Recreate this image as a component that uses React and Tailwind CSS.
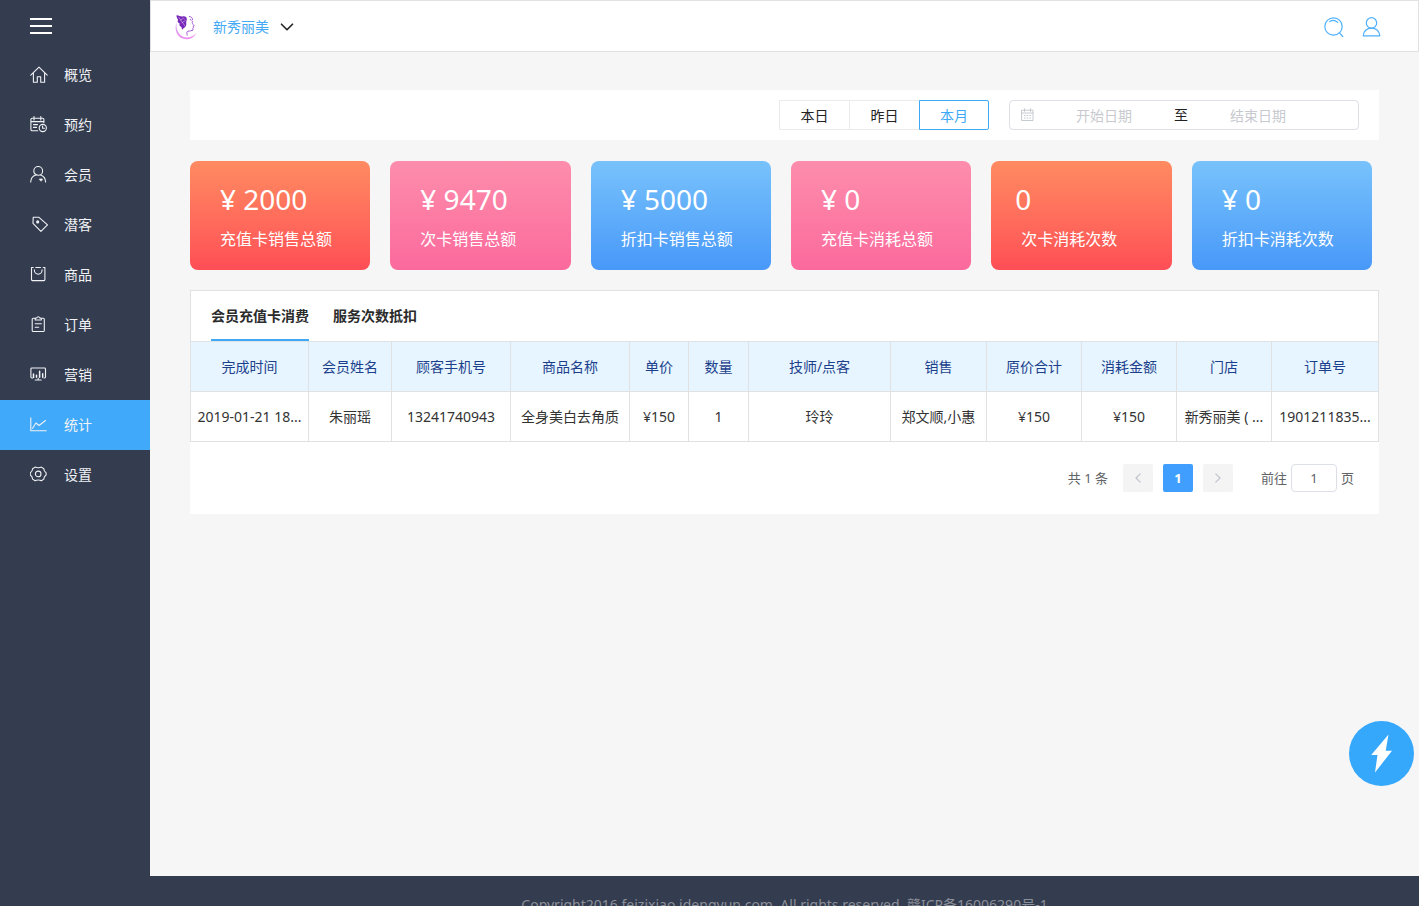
import React from "react";

const stroke = {
  fill: "none",
  stroke: "currentColor",
  strokeLinecap: "round",
  strokeLinejoin: "round",
};

function Icon({ children }) {
  return (
    <svg className="size-[18px] shrink-0" viewBox="0 0 18 18" strokeWidth="1.1" aria-hidden="true" {...stroke}>
      {children}
    </svg>
  );
}

const menu = [
  {
    label: "概览",
    icon: (
      <Icon>
        <path d="M.8 9.2 9 1.2l8.2 8M3.4 7.4v8.800h3.900v-5.500h3.400v5.500h3.900V7.4" />
      </Icon>
    ),
  },
  {
    label: "预约",
    icon: (
      <Icon>
        <path d="M7.8 14.700H2.2C1.4 14.700.9 14.200.9 13.400V3.600c0-.8.5-1.300 1.300-1.300h10.400c.8 0 1.300.5 1.300 1.300v3M.9 5.600h13M4 .6v3.400M10.800.6v3.400M3.500 8.600h4M3.500 11.400h3" />
        <circle cx="12.800" cy="12" r="3.600" />
        <path d="M12.600 10v2.200h1.800" />
      </Icon>
    ),
  },
  {
    label: "会员",
    icon: (
      <Icon>
        <circle cx="8.2" cy="4.900" r="4.400" />
        <path d="M.7 16c.2-3.600 2.300-6 5-6.900M10.700 9.100c2.800 1 4.800 3.300 4.900 6.900" />
        <path d="M10.900 15.200 9.300 13.600c-.3-.8.900-1.200 1.600-.5.8-.7 2-.3 1.700.5z" fill="currentColor" strokeWidth=".4" />
      </Icon>
    ),
  },
  {
    label: "潜客",
    icon: (
      <Icon>
        <path d="M3.200 1.200h5.500l8.800 7.600-6.600 6.600-7.900-8z" />
        <circle cx="7.700" cy="5.900" r="1" fill="currentColor" />
      </Icon>
    ),
  },
  {
    label: "商品",
    icon: (
      <Icon>
        <path d="M3.200 1.500H1.500v12.100c0 .6.400 1 1 1h11.400c.6 0 1-.4 1-1V1.500h-1.700M5.800 1.500h4.700M4.300 3.800c0 2.500 1.700 4.400 3.900 4.400s3.900-1.900 3.900-4.400" />
      </Icon>
    ),
  },
  {
    label: "订单",
    icon: (
      <Icon>
        <path d="M5.200 2.200H3.300c-.6 0-1.100.5-1.100 1.100v11.100c0 .6.500 1.100 1.100 1.100h9.900c.6 0 1.100-.5 1.100-1.100V3.300c0-.6-.5-1.100-1.100-1.100h-1.900M5.200 4V2.200L6.800 1.900c.5-1.500 2.400-1.500 2.900 0l1.600.3V4zM5.200 7.700h6.200M5.200 11.200h3.500" />
      </Icon>
    ),
  },
  {
    label: "营销",
    icon: (
      <Icon>
        <path d="M2.500 12H1.800c-.5 0-.9-.4-.9-.9V2.900c0-.5.400-.9.900-.9h12.800c.5 0 .9.400.9.900v8.200c0 .5-.4.900-.9.900h-.6M5.200 14h6M8.200 12.200V14" />
        <path d="M3.500 8v3.400M6.500 9.300v2M9.600 5.300v6M12.700 7.700v3.600" strokeWidth="1.500" />
      </Icon>
    ),
  },
  {
    label: "统计",
    active: true,
    icon: (
      <Icon>
        <path d="M.8 1.800v13h15.400M2.600 12.300 5.900 7l3.200 2.500 6.400-5" />
      </Icon>
    ),
  },
  {
    label: "设置",
    icon: (
      <Icon>
        <path d="M5.100 1.100c1 .5 1.700.6 3.100.6s2.200-.1 3.200-.6l2.400 1.600c.1 2 .5 2.900 2.300 4v2.300c-1.700 1.200-2.200 2.100-2.300 4.100l-2.400 1.600c-1-.6-1.800-.7-3.200-.7s-2.100.1-3.100.7l-2.500-1.600C2.500 11.100 2 10.200.300 9V6.700c1.800-1.100 2.200-2 2.300-4z" />
        <circle cx="8.200" cy="7.900" r="2.800" />
      </Icon>
    ),
  },
];

const cards = [
  { value: "¥ 2000", label: "充值卡销售总额", tone: "from-[#ff8a61] to-[#fe4d56]", pad: "pl-[30px]" },
  { value: "¥ 9470", label: "次卡销售总额", tone: "from-[#fd8dac] to-[#fb699c]", pad: "pl-[30px]" },
  { value: "¥ 5000", label: "折扣卡销售总额", tone: "from-[#78c2fb] to-[#4898f9]", pad: "pl-[30px]" },
  { value: "¥ 0", label: "充值卡消耗总额", tone: "from-[#fd8dac] to-[#fb699c]", pad: "pl-[30px]" },
  { value: "0", label: "次卡消耗次数", tone: "from-[#ff8a61] to-[#fe4d56]", pad: "pl-6" },
  { value: "¥ 0", label: "折扣卡消耗次数", tone: "from-[#78c2fb] to-[#4898f9]", pad: "pl-[30px]" },
];

const columns = [
  { title: "完成时间", width: "w-[118px]", cell: "2019-01-21 18..." },
  { title: "会员姓名", width: "w-[83px]", cell: "朱丽瑶" },
  { title: "顾客手机号", width: "w-[119px]", cell: "13241740943" },
  { title: "商品名称", width: "w-[119px]", cell: "全身美白去角质" },
  { title: "单价", width: "w-[59px]", cell: "¥150" },
  { title: "数量", width: "w-[60px]", cell: "1" },
  { title: "技师/点客", width: "w-[142px]", cell: "玲玲" },
  { title: "销售", width: "w-[96px]", cell: "郑文顺,小惠" },
  { title: "原价合计", width: "w-[95px]", cell: "¥150" },
  { title: "消耗金额", width: "w-[95px]", cell: "¥150" },
  { title: "门店", width: "w-[95px]", cell: "新秀丽美 ( ..." },
  { title: "订单号", width: "w-[107px]", cell: "1901211835..." },
];

function Sidebar() {
  return (
    <aside className="w-[150px] shrink-0 bg-[#343c4f] text-[#f0f2f5]">
      <button type="button" aria-label="菜单" className="flex h-[50px] w-full flex-col gap-[5px] pt-[18px] pl-[30px]">
        <span className="h-[2px] w-[22px] bg-white" />
        <span className="h-[2px] w-[22px] bg-white" />
        <span className="h-[2px] w-[22px] bg-white" />
      </button>
      <nav>
        {menu.map((m) => (
          <a
            key={m.label}
            href="#"
            className={
              m.active
                ? "flex h-[50px] items-center gap-4 bg-[#40a9fa] pl-[30px]"
                : "flex h-[50px] items-center gap-4 pl-[30px]"
            }
          >
            {m.icon}
            <span>{m.label}</span>
          </a>
        ))}
      </nav>
    </aside>
  );
}

function Logo() {
  return (
    <svg className="h-[26px] w-6" viewBox="0 0 24 26" fill="none" aria-hidden="true">
      <defs>
        <linearGradient id="ring" x1="0" y1="0" x2="1" y2="1">
          <stop offset="0" stopColor="#d9a0ee" />
          <stop offset="1" stopColor="#f47ff0" />
        </linearGradient>
      </defs>
      <path d="M1.600 8C-1.500 17 3 25.500 12 25.200c4.500-.2 7.600-2.700 9.400-6.200-2.700 3-5.700 4.700-9.600 4.500C4.500 23.200.5 16.500 1.600 8z" fill="url(#ring)" />
      <path d="M1.500 1.200c3 .1 4.200 1.700 6 1.200 2.600-.5 4.400.600 4.300 2.900 0 1.500-.9 2.300-.6 3.700.4 1.900-.1 3.500-1.600 4.400-1 .6-1.700 1.300-2.300 2.400-.8-1-.4-2-.9-2.800-1.800-.6-2.400-2-1.700-3.400C2.500 8.500 2.100 7 3.200 5.700 2 4.500 1.500 3 1.500 1.200z" fill="#7627b8" />
      <path d="m3.500 3 6.500 9M5 6.500l3-2M6.500 9l4-2.500M8 3.500l1.700 2" stroke="#d9b8ee" strokeWidth=".6" />
      <path d="M14 2.500c2.500.1 3.600 1.500 3.500 3.600M15.300 5l1 1.600M17.500 7.200c-.6 1.700 0 2.500 1.700 4.500l-1.200.9.500 1.200-.7.800.2 1.600c-1.800.9-3.300.4-5.600 1.200-.9.500-.4 2.200-.2 4.200" stroke="#a75bd8" strokeWidth="1" />
    </svg>
  );
}

function Header() {
  return (
    <header className="flex h-[52px] shrink-0 items-center border border-[#e0e1e3] bg-white pt-[2px] pr-9 pl-6">
      <Logo />
      <button type="button" className="ml-3.5 flex items-center gap-[11px] text-[#44a9f5]">
        <span>新秀丽美</span>
        <svg className="h-2 w-[14px] text-[#222]" viewBox="0 0 14 8" strokeWidth="1.6" {...stroke}>
          <path d="m1.500 1.200 5.500 5.500 5.500-5.500" />
        </svg>
      </button>
      <div className="ml-auto flex gap-[18px] text-[#4fb0fb]">
        <button type="button" aria-label="搜索">
          <svg className="size-5" viewBox="0 0 20 20" strokeWidth="1.200" {...stroke}>
            <circle cx="9.500" cy="9.500" r="8.700" />
            <path d="M5.800 4.600c2.500-1.700 5.600-1.500 7.800.7M15.300 15.700l3.500 3.800" />
          </svg>
        </button>
        <button type="button" aria-label="用户">
          <svg className="size-5" viewBox="0 0 20 20" strokeWidth="1.200" {...stroke}>
            <circle cx="9.500" cy="5.900" r="5.200" />
            <path d="M1.200 18.800c.200-4.400 3.500-7.700 8.300-7.700s8.100 3.300 8.300 7.700z" />
          </svg>
        </button>
      </div>
    </header>
  );
}

function Filters() {
  return (
    <section className="flex h-[50px] items-center justify-end gap-5 bg-white pr-5">
      <div className="flex h-[30px] text-[#222]">
        <button type="button" className="w-[70px] rounded-l-[2px] border border-r-0 border-[#ebebeb] pt-[2px]">本日</button>
        <button type="button" className="w-[70px] border border-r-0 border-[#ebebeb] pt-[2px]">昨日</button>
        <button type="button" className="w-[70px] rounded-r-[2px] border border-[#40a9f5] pt-[2px] text-[#40a9f5]">本月</button>
      </div>
      <div className="flex h-[30px] w-[350px] items-center rounded border border-[#dcdfe6] pl-[11px]">
        <svg className="size-[14px] shrink-0 text-[#c0c4cc]" viewBox="0 0 14 14" strokeWidth=".9" {...stroke}>
          <path d="M1 2.200h11v10.300H1zM1 5h11M3.500.8v2.500M9.500.8v2.500" />
          <path d="M3.400 7.500h.8M6.100 7.500h.8M8.800 7.500h.8M3.400 10h.8M6.100 10h.8M8.800 10h.8" />
        </svg>
        <input aria-label="开始日期" placeholder="开始日期" className="w-[138px] pt-[2px] text-center outline-none placeholder:text-[#c8cacf]" />
        <span className="w-4 text-center text-[#222]">至</span>
        <input aria-label="结束日期" placeholder="结束日期" className="w-[138px] pt-[2px] text-center outline-none placeholder:text-[#c8cacf]" />
      </div>
    </section>
  );
}

function Pagination() {
  return (
    <div className="flex h-[72px] items-center justify-end pr-[25px] text-[13px] text-[#606266]">
      <span className="mr-[15px]">共 1 条</span>
      <div className="flex gap-2.5">
        <button type="button" disabled aria-label="上一页" className="flex h-7 w-[30px] items-center justify-center rounded-[2px] bg-[#f4f4f5] text-[#c0c4cc]">
          <svg className="h-[10px] w-[6px]" viewBox="0 0 6 10" strokeWidth="1.200" {...stroke}>
            <path d="M5.200.8 1 5l4.200 4.200" />
          </svg>
        </button>
        <button type="button" className="h-7 w-[30px] rounded-[2px] bg-[#409eff] font-bold text-white">1</button>
        <button type="button" disabled aria-label="下一页" className="flex h-7 w-[30px] items-center justify-center rounded-[2px] bg-[#f4f4f5] text-[#c0c4cc]">
          <svg className="h-[10px] w-[6px]" viewBox="0 0 6 10" strokeWidth="1.200" {...stroke}>
            <path d="M.8.800 5 5 .8 9.200" />
          </svg>
        </button>
      </div>
      <label className="ml-7 flex items-center gap-1">
        前往
        <input defaultValue="1" className="h-7 w-[46px] rounded border border-[#dcdfe6] text-center outline-none" />
        页
      </label>
    </div>
  );
}

export default function App() {
  return (
    <div className="flex h-screen overflow-hidden bg-[#f6f6f6] font-['Noto_Sans','Noto_Sans_CJK_SC',sans-serif] text-sm">
      <Sidebar />
      <div className="flex min-w-0 flex-1 flex-col">
        <Header />
        <main className="min-h-0 flex-1 px-10 pt-[38px]">
          <Filters />
          <section className="mt-[21px] grid grid-cols-6 gap-5 pr-[7px] text-white">
            {cards.map((c) => (
              <div key={c.label} className={`h-[109px] rounded-lg bg-linear-to-b pt-[18px] ${c.tone}`}>
                <div className={`text-[28px] leading-10 ${c.pad}`}>{c.value}</div>
                <div className="mt-2 pl-[30px] text-base leading-6">{c.label}</div>
              </div>
            ))}
          </section>
          <section className="mt-5 bg-white">
            <div className="flex h-[51px] gap-6 border border-b-0 border-[#e0e1e3] pl-5 font-bold text-[#2b2b2b]">
              <button type="button" className="border-b-2 border-[#40a9f5] pt-[2px]">会员充值卡消费</button>
              <button type="button" className="border-b-2 border-transparent pt-[2px]">服务次数抵扣</button>
            </div>
            <table className="w-full table-fixed border-collapse text-center">
              <thead>
                <tr className="h-[50px] bg-[#e6f5ff] text-[#1c3f8c]">
                  {columns.map((c) => (
                    <th key={c.title} className={`border border-[#e0e1e3] font-normal ${c.width}`}>{c.title}</th>
                  ))}
                </tr>
              </thead>
              <tbody>
                <tr className="h-[50px] text-[#333]">
                  {columns.map((c) => (
                    <td key={c.title} className="truncate border border-[#e0e1e3] px-[3px]">{c.cell}</td>
                  ))}
                </tr>
              </tbody>
            </table>
            <Pagination />
          </section>
        </main>
        <footer className="h-[30px] shrink-0 overflow-hidden bg-[#343c4f] pt-[19px] text-center leading-5 text-[#8b8f98]">
          Copyright2016 feizixiao.idengyun.com. All rights reserved. 赣ICP备16006290号-1
        </footer>
      </div>
      <button
        type="button"
        aria-label="快捷操作"
        className="fixed right-[5px] bottom-[120px] flex size-[65px] items-center justify-center rounded-full bg-[#35a8fc]"
      >
        <svg className="h-[39px] w-[21px]" viewBox="0 0 21 39" fill="#fff" aria-hidden="true">
          <path d="M17.500.500.200 21h6.300L4 38.500 21 16.800h-6.300z" />
        </svg>
      </button>
    </div>
  );
}
